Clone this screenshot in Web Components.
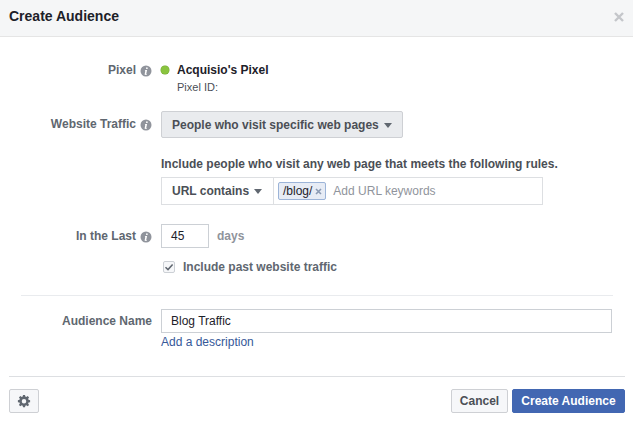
<!DOCTYPE html>
<html>
<head>
<meta charset="utf-8">
<style>
html, body { margin: 0; padding: 0; background: #fff; }
body { font-family: "Liberation Sans", Arial, sans-serif; font-size: 12px; color: #1d2129; width: 633px; height: 425px; overflow: hidden; }
</style>
</head>
<body>
<audience-dialog></audience-dialog>
<script>
const INFO = `<svg width="12" height="12" viewBox="0 0 12 12"><circle cx="6" cy="6" r="5.5" fill="#90949c"/><path d="M6.900 2.300a.85.85 0 1 1-.01 1.700.85.85 0 0 1 .01-1.700zM5 5h2.100L6.300 8.800c-.05.3.2.35.8.1l-.1.6c-.6.3-1.100.4-1.500.4-.6 0-.9-.4-.8-.9l.6-3.300-.4-.1z" fill="#fff"/></svg>`;

class FormRow extends HTMLElement {
    constructor() {
        super();
        this.attachShadow({ mode: 'open' }).innerHTML = `
            <style>
                :host { display: grid; grid-template-columns: 152px 1fr; column-gap: 9px; align-items: start; }
                .label { display: flex; justify-content: flex-end; align-items: center; gap: 4px; font-weight: bold; color: #606770; height: var(--label-h, 24px); }
                .label svg { display: block; margin-top: 1px; }
            </style>
            <div class="label"><span>${this.getAttribute('label') || ''}</span>${this.hasAttribute('info') ? INFO : ''}</div>
            <div class="content"><slot></slot></div>`;
    }
}

class DropButton extends HTMLElement {
    constructor() {
        super();
        this.attachShadow({ mode: 'open' }).innerHTML = `
            <style>
                :host { display: inline-flex; align-items: center; gap: 5px; font-weight: bold; color: #4b4f56; box-sizing: border-box; white-space: nowrap; }
                i { width: 0; height: 0; border-left: 4.5px solid transparent; border-right: 4.5px solid transparent; border-top: 5px solid #606770; margin-top: 1px; }
            </style>
            <slot></slot><i></i>`;
    }
}

class FbButton extends HTMLElement {
    constructor() {
        super();
        this.attachShadow({ mode: 'open' }).innerHTML = `
            <style>
                :host { display: inline-flex; align-items: center; justify-content: center; box-sizing: border-box; height: 24px; padding: 0 8px; border-radius: 2px; border: 1px solid #ced0d4; background: #f6f7f9; color: #4b4f56; font-weight: bold; white-space: nowrap; }
                :host([primary]) { background: #4267b2; border-color: #4267b2; color: #fff; }
            </style>
            <slot></slot>`;
    }
}

class UrlTag extends HTMLElement {
    constructor() {
        super();
        this.attachShadow({ mode: 'open' }).innerHTML = `
            <style>
                :host { display: inline-flex; align-items: center; box-sizing: border-box; height: 18px; padding: 0 3px 0 4px; gap: 3px; background: #e7ecf5; border: 1px solid #9cb4d8; border-radius: 2px; color: #1d2129; }
                svg { display: block; margin-top: 1px; }
            </style>
            <slot></slot><svg width="7" height="7" viewBox="0 0 7 7"><path d="M1 1l5 5M6 1L1 6" stroke="#8a9ab3" stroke-width="1.6"/></svg>`;
    }
}

class AudienceDialog extends HTMLElement {
    constructor() {
        super();
        this.attachShadow({ mode: 'open' }).innerHTML = `
            <style>
                :host { display: block; width: 633px; height: 425px; }
                header { height: 36px; background: #f5f6f7; border-bottom: 1px solid #e5e5e5; display: flex; align-items: center; justify-content: space-between; padding: 0 9px; }
                h1 { margin: 0 0 4px; font-size: 14px; font-weight: bold; color: #1d2129; }
                header svg { display: block; margin-bottom: 3px; }
                .rows { padding-top: 25px; }
                form-row { padding-right: 21px; }
                .pixel { --label-h: 16px; }
                .pixel-name { display: flex; align-items: center; height: 16px; gap: 8px; font-weight: bold; color: #1d2129; }
                .dot { width: 8px; height: 8px; border-radius: 50%; background: #8ac43f; box-shadow: 0 0 0 .5px #6ea52e; }
                .pixel-id { margin: 2px 0 0 16px; font-size: 11px; color: #4b4f56; line-height: 14px; }
                .traffic { margin-top: 17px; --label-h: 26px; }
                .drop { height: 27px; width: 242px; padding: 0 10px; background: #e9ebee; border: 1px solid #ced0d4; border-radius: 2px; }
                .rule { margin: 19px 0 0; font-weight: bold; color: #4b4f56; line-height: 14px; white-space: nowrap; }
                .url { display: flex; height: 28px; width: 382px; box-sizing: border-box; border: 1px solid #dddfe2; margin-top: 6px; background: #fff; }
                .url drop-button { width: 112px; padding-left: 10px; border-right: 1px solid #dddfe2; }
                .keywords { display: flex; align-items: center; padding-left: 4px; gap: 7px; color: #90949c; }
                .last { margin-top: 19px; }
                .inline { display: flex; align-items: center; gap: 8px; }
                .box { box-sizing: border-box; height: 24px; border: 1px solid #ccd0d5; background: #fff; display: flex; align-items: center; padding-left: 9px; color: #1d2129; }
                .days { font-weight: bold; color: #90949c; }
                .past { display: flex; align-items: center; gap: 8px; margin: 11px 0 0 2px; height: 16px; font-weight: bold; color: #606770; }
                .check { width: 12px; height: 12px; box-sizing: border-box; border: 1px solid #ccd0d5; border-radius: 2px; background: #f6f7f9; display: flex; align-items: center; justify-content: center; }
                hr { border: 0; height: 1px; background: #e9ebee; margin: 0; }
                .sep { margin: 20px 20px 13px 21px; }
                a { display: block; color: #365899; margin-top: 2px; line-height: 14px; text-decoration: none; }
                footer { margin: 0 8px 0 9px; }
                .bar { display: flex; justify-content: space-between; padding-top: 12px; }
                .bar div { display: flex; gap: 4px; }
                .foot-sep { margin-top: 27px; background: #dddfe2; }
                .gear { width: 30px; padding: 0; }
            </style>
            <header>
                <h1>Create Audience</h1>
                <svg width="10" height="10" viewBox="0 0 10 10"><path d="M1 1l8 8M9 1L1 9" stroke="#c4c6ca" stroke-width="2.4"/></svg>
            </header>
            <div class="rows">
                <form-row class="pixel" label="Pixel" info>
                    <div class="pixel-name"><span class="dot"></span><span>Acquisio's Pixel</span></div>
                    <div class="pixel-id">Pixel ID:</div>
                </form-row>
                <form-row class="traffic" label="Website Traffic" info>
                    <drop-button class="drop">People who visit specific web pages</drop-button>
                    <p class="rule">Include people who visit any web page that meets the following rules.</p>
                    <div class="url">
                        <drop-button>URL contains</drop-button>
                        <div class="keywords"><url-tag>/blog/</url-tag><span>Add URL keywords</span></div>
                    </div>
                </form-row>
                <form-row class="last" label="In the Last" info>
                    <div class="inline"><div class="box" style="width:48px">45</div><span class="days">days</span></div>
                    <div class="past"><span class="check"><svg width="10" height="10" viewBox="0 0 10 10"><path d="M1.500 5.200L4 7.600 8.600 2.400" fill="none" stroke="#606770" stroke-width="1.500"/></svg></span><span>Include past website traffic</span></div>
                </form-row>
                <hr class="sep">
                <form-row label="Audience Name">
                    <div class="box" style="width:451px">Blog Traffic</div>
                    <a href="#">Add a description</a>
                </form-row>
            </div>
            <footer>
                <hr class="foot-sep">
                <div class="bar">
                    <fb-button class="gear"><svg width="14" height="14" viewBox="0 0 14 14"><path fill="#606770" fill-rule="evenodd" d="M5.900 1h2.200l.4 1.800 1 .4 1.600-1 1.500 1.600-1 1.500.4 1.100 1.800.5v2.200l-1.800.4-.4 1 1 1.600-1.500 1.500-1.600-1-1 .4-.4 1.800H5.900l-.4-1.800-1-.4-1.600 1-1.500-1.500 1-1.600-.4-1-1.800-.4V6.900l1.800-.4.4-1.100-1-1.500 1.500-1.600 1.600 1 1-.4zM7 5.500a2.500 2.500 0 1 0 0 5 2.500 2.500 0 0 0 0-5z" transform="translate(0.700 0) scale(.9)"/></svg></fb-button>
                    <div><fb-button style="width:57px">Cancel</fb-button><fb-button primary style="width:113px">Create Audience</fb-button></div>
                </div>
            </footer>`;
    }
}

customElements.define('form-row', FormRow);
customElements.define('drop-button', DropButton);
customElements.define('fb-button', FbButton);
customElements.define('url-tag', UrlTag);
customElements.define('audience-dialog', AudienceDialog);
</script>
</body>
</html>
